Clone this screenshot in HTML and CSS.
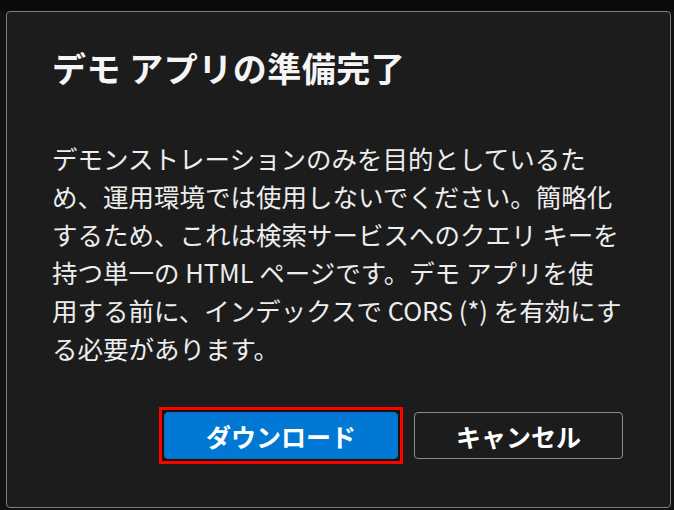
FILE: index.html
```html
<!DOCTYPE html>
<html lang="ja">
<head>
<meta charset="utf-8">
<link rel="stylesheet" href="styles.css">
</head>
<body>
<div class="backdrop">
  <div class="dialog" role="dialog" aria-labelledby="dlg-title">
    <h1 class="dialog-title" id="dlg-title">デモ アプリの準備完了</h1>
    <p class="dialog-body">デモンストレーションのみを目的としているた<br>め、運用環境では使用しないでください。簡略化<br>するため、これは検索サービスへのクエリ キーを<br>持つ単一の HTML ページです。デモ アプリを使<br>用する前に、インデックスで CORS (*) を有効にす<br>る必要があります。</p>
    <div class="dialog-actions">
      <span class="highlight"><button class="btn btn-primary">ダウンロード</button></span>
      <button class="btn btn-secondary">キャンセル</button>
    </div>
  </div>
</div>
</body>
</html>
```

FILE: styles.css
```css
html, body {
  margin: 0;
  padding: 0;
}
body {
  width: 674px;
  height: 510px;
  overflow: hidden;
  background: #0e0e0e;
  font-family: "Noto Sans CJK JP", "Noto Sans", sans-serif;
}
.backdrop {
  padding: 11px 4px 0 6px;
  background:
    linear-gradient(#0b0b0b, #0b0b0b) top / 100% 11px no-repeat,
    #111111;
  height: 510px;
  box-sizing: border-box;
}
.dialog {
  box-sizing: border-box;
  width: 665px;
  height: 497px;
  background: #1c1c1c;
  border: 1px solid #7d7d7d;
  border-radius: 4px;
  padding: 39px 47px 0 45px;
  display: flex;
  flex-direction: column;
}
.dialog-title {
  margin: 0;
  font-size: 34px;
  line-height: 34px;
  font-weight: 700;
  color: #f5f5f5;
  letter-spacing: 0.5px;
}
.dialog-body {
  margin: 54px 0 0 0;
  font-size: 25.5px;
  line-height: 38px;
  color: #ededed;
  white-space: nowrap;
}
.dialog-actions {
  display: flex;
  justify-content: flex-end;
  align-items: center;
  gap: 16px;
  margin-top: 45px;
}
.highlight {
  display: flex;
  border: 3px solid #ff0000;
  padding: 2px;
  margin: -5px;
  background: #141414;
}
.btn {
  box-sizing: border-box;
  height: 47px;
  border-radius: 4px;
  font-family: "Noto Sans CJK JP", "Noto Sans", sans-serif;
  font-size: 25px;
  font-weight: 700;
  color: #ffffff;
  padding: 0;
  cursor: pointer;
}
.btn-primary {
  width: 234px;
  background: #0078d4;
  border: 1px solid #0a6fc2;
}
.btn-secondary {
  width: 209px;
  background: #1c1c1c;
  border: 1px solid #8a8a8a;
}
```
